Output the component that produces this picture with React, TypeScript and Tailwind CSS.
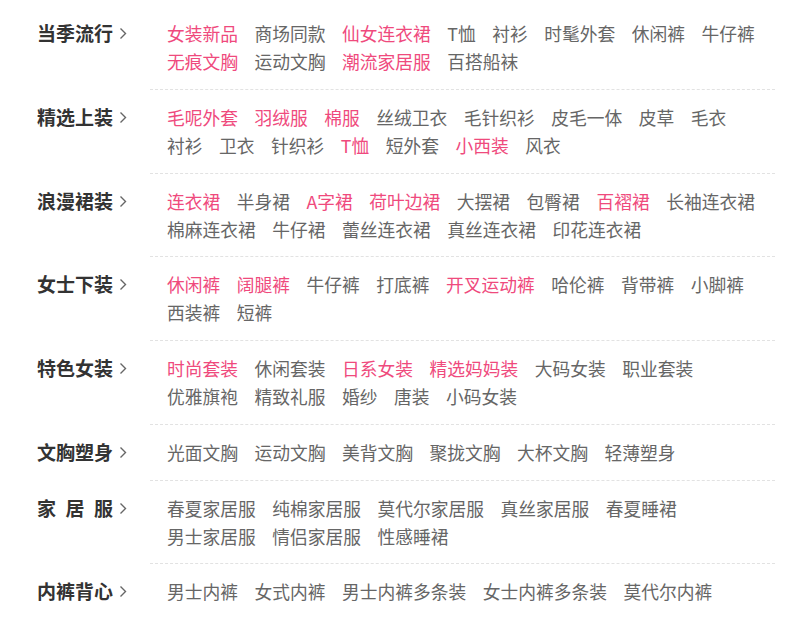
type Link = { t: string; hot?: boolean };

const h = (t: string): Link => ({ t, hot: true });
const n = (t: string): Link => ({ t });

const sections: { title: string; lines: Link[][] }[] = [
  {
    title: "当季流行",
    lines: [
      [h("女装新品"), n("商场同款"), h("仙女连衣裙"), n("T恤"), n("衬衫"), n("时髦外套"), n("休闲裤"), n("牛仔裤")],
      [h("无痕文胸"), n("运动文胸"), h("潮流家居服"), n("百搭船袜")],
    ],
  },
  {
    title: "精选上装",
    lines: [
      [h("毛呢外套"), h("羽绒服"), h("棉服"), n("丝绒卫衣"), n("毛针织衫"), n("皮毛一体"), n("皮草"), n("毛衣")],
      [n("衬衫"), n("卫衣"), n("针织衫"), h("T恤"), n("短外套"), h("小西装"), n("风衣")],
    ],
  },
  {
    title: "浪漫裙装",
    lines: [
      [h("连衣裙"), n("半身裙"), h("A字裙"), h("荷叶边裙"), n("大摆裙"), n("包臀裙"), h("百褶裙"), n("长袖连衣裙")],
      [n("棉麻连衣裙"), n("牛仔裙"), n("蕾丝连衣裙"), n("真丝连衣裙"), n("印花连衣裙")],
    ],
  },
  {
    title: "女士下装",
    lines: [
      [h("休闲裤"), h("阔腿裤"), n("牛仔裤"), n("打底裤"), h("开叉运动裤"), n("哈伦裤"), n("背带裤"), n("小脚裤")],
      [n("西装裤"), n("短裤")],
    ],
  },
  {
    title: "特色女装",
    lines: [
      [h("时尚套装"), n("休闲套装"), h("日系女装"), h("精选妈妈装"), n("大码女装"), n("职业套装")],
      [n("优雅旗袍"), n("精致礼服"), n("婚纱"), n("唐装"), n("小码女装")],
    ],
  },
  {
    title: "文胸塑身",
    lines: [[n("光面文胸"), n("运动文胸"), n("美背文胸"), n("聚拢文胸"), n("大杯文胸"), n("轻薄塑身")]],
  },
  {
    title: "家居服",
    lines: [
      [n("春夏家居服"), n("纯棉家居服"), n("莫代尔家居服"), n("真丝家居服"), n("春夏睡裙")],
      [n("男士家居服"), n("情侣家居服"), n("性感睡裙")],
    ],
  },
  {
    title: "内裤背心",
    lines: [[n("男士内裤"), n("女式内裤"), n("男士内裤多条装"), n("女士内裤多条装"), n("莫代尔内裤")]],
  },
];

function Chevron() {
  return (
    <svg width="8" height="13" viewBox="0 0 8 13" className="ml-[6px] mt-[1px] text-[#666]">
      <polyline points="1.5,1.5 6.5,6.5 1.5,11.5" fill="none" stroke="currentColor" strokeWidth="1.4" />
    </svg>
  );
}

export default function App() {
  return (
    <div
      className="w-[807px] h-[621px] bg-white pl-[37px] pt-[6px] overflow-hidden"
      style={{ fontFamily: '"Noto Sans CJK SC", "Noto Sans", sans-serif' }}
    >
      {sections.map((s, i) => (
        <div key={s.title} className="flex">
          {/* category label */}
          <div className={`w-[113px] shrink-0 pt-[13px] ${i > 0 ? "mt-px" : ""}`}>
            <div className="flex items-center h-[28px]">
              <div className="flex justify-between w-[76px] text-[19px] font-bold text-[#333] leading-[28px]">
                {s.title.split("").map((c, k) => (
                  <span key={k}>{c}</span>
                ))}
              </div>
              <Chevron />
            </div>
          </div>

          {/* links */}
          <div
            className={`w-[625px] pl-[17px] pt-[13px] pb-[13.75px] border-dashed border-[#e2e2e2] ${
              i > 0 ? "border-t" : ""
            }`}
          >
            {s.lines.map((line, j) => (
              <div key={j} className="flex gap-x-[16.5px] h-[28px] items-center text-[17.75px] leading-[28px] whitespace-nowrap">
                {line.map((l, k) => (
                  <a key={k} className={l.hot ? "text-[#ef4a7d]" : "text-[#666]"}>
                    {l.t}
                  </a>
                ))}
              </div>
            ))}
          </div>
        </div>
      ))}
    </div>
  );
}
